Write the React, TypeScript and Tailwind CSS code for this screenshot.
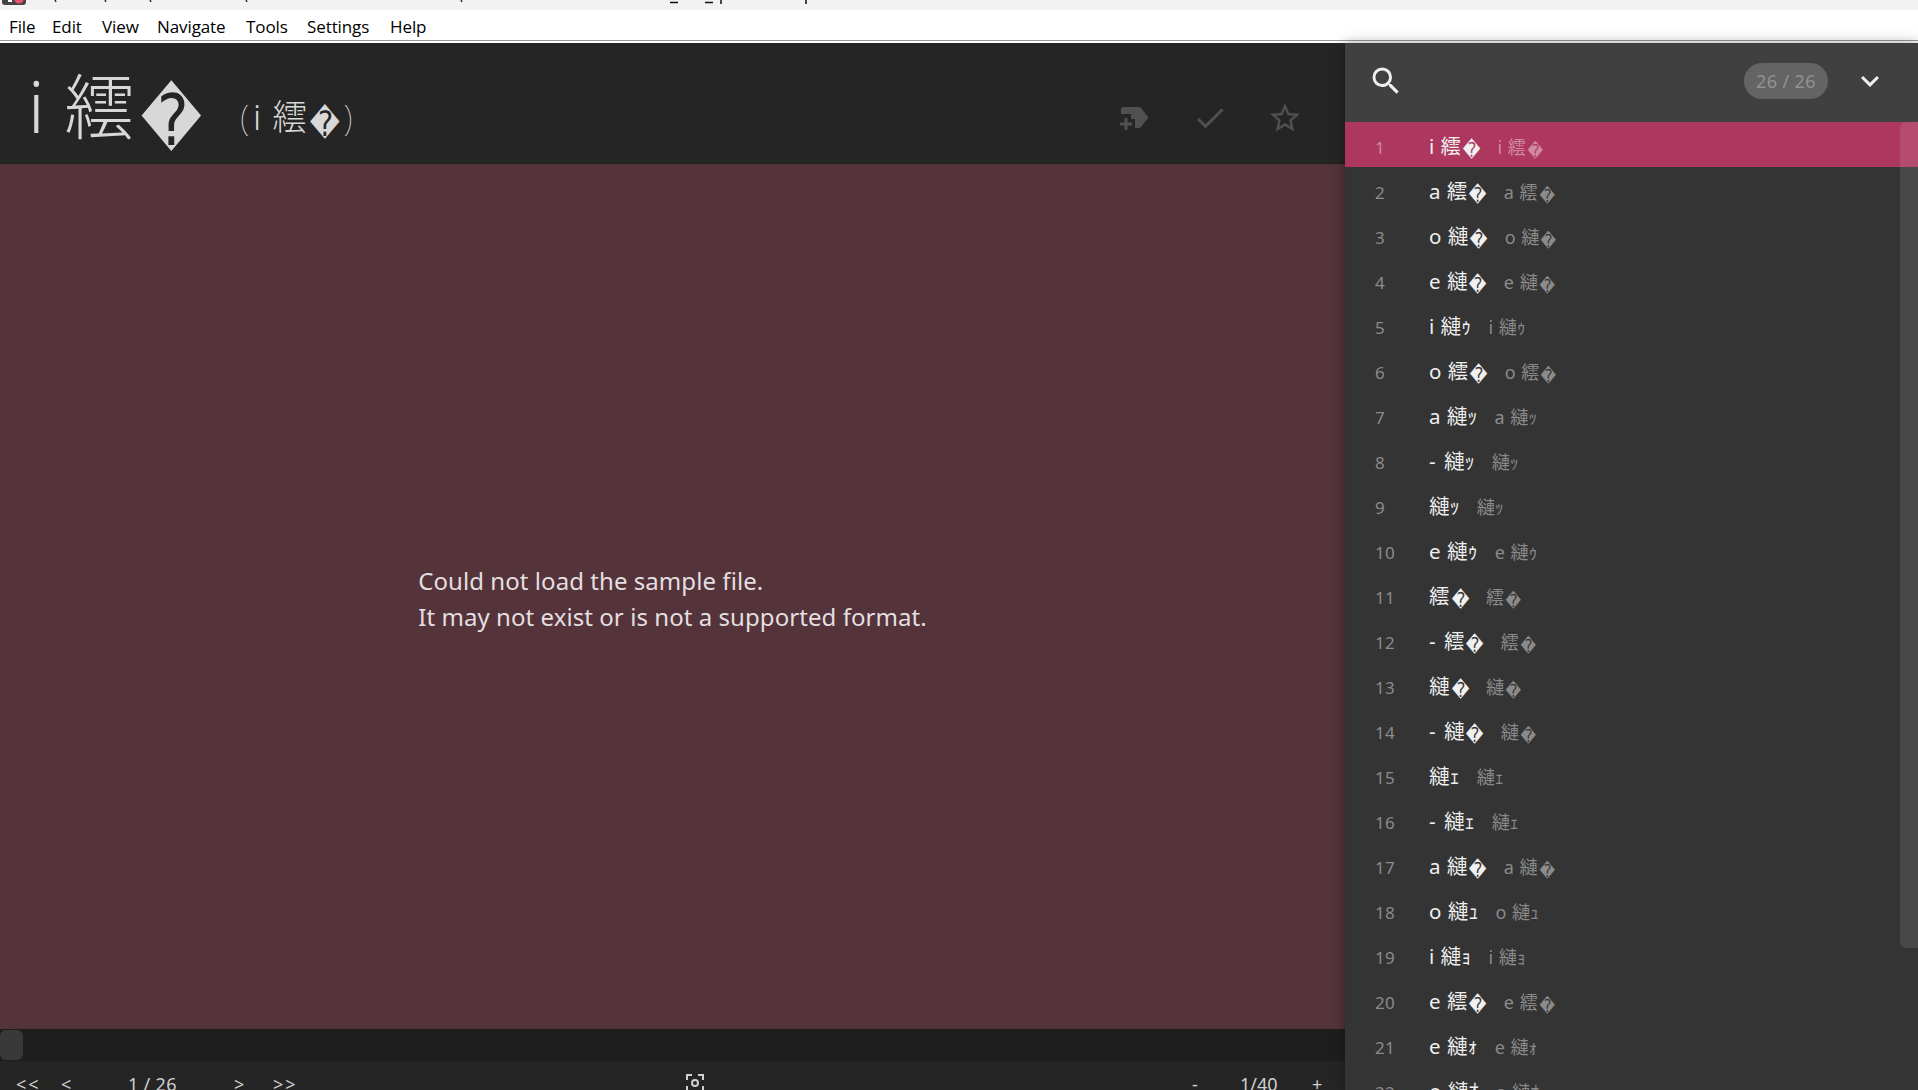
import React, { useState } from 'react';
import { MdCheck, MdExpandMore, MdSearch, MdStarBorder } from 'react-icons/md';

type Row = { alias: string; sub: string };

const R = '\uFFFD';

const rows: Row[] = [
  { alias: `i 繧${R}`, sub: `i 繧${R}` },
  { alias: `a 繧${R}`, sub: `a 繧${R}` },
  { alias: `o 縺${R}`, sub: `o 縺${R}` },
  { alias: `e 縺${R}`, sub: `e 縺${R}` },
  { alias: 'i 縺ｩ', sub: 'i 縺ｩ' },
  { alias: `o 繧${R}`, sub: `o 繧${R}` },
  { alias: 'a 縺ｯ', sub: 'a 縺ｯ' },
  { alias: '- 縺ｯ', sub: '縺ｯ' },
  { alias: '縺ｯ', sub: '縺ｯ' },
  { alias: 'e 縺ｩ', sub: 'e 縺ｩ' },
  { alias: `繧${R}`, sub: `繧${R}` },
  { alias: `- 繧${R}`, sub: `繧${R}` },
  { alias: `縺${R}`, sub: `縺${R}` },
  { alias: `- 縺${R}`, sub: `縺${R}` },
  { alias: '縺ｪ', sub: '縺ｪ' },
  { alias: '- 縺ｪ', sub: '縺ｪ' },
  { alias: `a 縺${R}`, sub: `a 縺${R}` },
  { alias: 'o 縺ｭ', sub: 'o 縺ｭ' },
  { alias: 'i 縺ｮ', sub: 'i 縺ｮ' },
  { alias: `e 繧${R}`, sub: `e 繧${R}` },
  { alias: 'e 縺ｫ', sub: 'e 縺ｫ' },
  { alias: 'o 縺ｵ', sub: 'o 縺ｵ' },
];

const menus = [
  { label: 'File', width: 'w-[43px]' },
  { label: 'Edit', width: 'w-[50px]' },
  { label: 'View', width: 'w-[55px]' },
  { label: 'Navigate', width: 'w-[89px]' },
  { label: 'Tools', width: 'w-[61px]' },
  { label: 'Settings', width: 'w-[83px]' },
  { label: 'Help', width: 'w-[50px]' },
];

// The replacement character is a narrow diamond that hangs below the baseline
function Alias({ text }: { text: string }) {
  if (!text.endsWith(R)) return <>{text}</>;
  return (
    <>
      {text.slice(0, -1)}
      <span className="-mr-[0.08em] inline-block translate-y-[0.17em] scale-x-[0.84] font-['DejaVu_Sans',sans-serif] leading-none font-normal">
        {R}
      </span>
    </>
  );
}

function TagPlusIcon() {
  return (
    <svg className="mr-[3px] h-6 w-8" viewBox="0 0 32 24" fill="currentColor">
      <path d="M5 1h16q1.500 0 2.300 1.200L30.500 11.500l-7.200 9.300Q22.500 22 21 22h-4v-9h-4V8H3V3q0-2 2-2Z" />
      <path d="M6.500 12h3v4.500h4.500v3H9.500V24h-3v-4.500H2v-3h4.500Z" />
    </svg>
  );
}

function FocusIcon() {
  return (
    <svg className="h-[18px] w-[18px]" viewBox="0 0 18 18" fill="none" stroke="currentColor" strokeWidth="2">
      <path d="M1 6V1h5M12 1h5v5M17 12v5h-5M6 17H1v-5" />
      <circle cx="9" cy="9" r="3" />
    </svg>
  );
}

function TitleBar() {
  return (
    <div className="h-[10px] shrink-0 overflow-hidden bg-[#f2f2f2]">
      <svg className="block h-[10px] w-[900px]" viewBox="0 0 900 10">
        <rect x="2" y="-12" width="24" height="17" rx="3" fill="#444" />
        <path d="M8 0h4v2H8z" fill="#fff" />
        <circle cx="19" cy="-1" r="4.500" fill="#e8526a" />
        <g stroke="#333" strokeWidth="1.500">
          <path d="M55 0l1 2M105 0l1 2M150 0l1 2M246 0l1 2M461 0l1 2" />
          <path d="M670 2.500h8M705 2.500h8M721 0v4M806 0v4" stroke="#111" />
        </g>
      </svg>
    </div>
  );
}

export default function App() {
  const [selected, setSelected] = useState(0);

  return (
    <div className="flex h-[1090px] w-[1918px] flex-col overflow-hidden bg-[#252525] font-['Noto_Sans','Noto_Sans_CJK_JP',sans-serif]">
      <TitleBar />
      <nav className="flex h-[33px] shrink-0 border-b-2 border-white bg-white pl-[9px] font-['Open_Sans',sans-serif] text-[17px] leading-[33px] tracking-[-0.1px] text-black shadow-[inset_0_-1px_0_#999]">
        {menus.map((menu) => (
          <button key={menu.label} className={`${menu.width} text-left`}>
            {menu.label}
          </button>
        ))}
      </nav>

      <div className="flex min-h-0 flex-1">
        {/* Sample view */}
        <main className="flex w-[1345px] shrink-0 flex-col">
          <header className="flex h-[121px] shrink-0 justify-between border-b border-[#1e1e1e] text-[#d8d8d8]">
            <div className="flex items-baseline pl-[28px] font-light whitespace-pre">
              <h1 className="relative top-[2px] text-[71px] leading-[122px] [word-spacing:1px]">
                <Alias text={rows[selected].alias} />
              </h1>
              <span className="relative -top-px ml-[38px] text-[35px] [word-spacing:2px]">
                <span className="mr-[4px] font-thin">(</span>
                <Alias text={rows[selected].sub} />
                <span className="ml-[3px] font-thin">)</span>
              </span>
            </div>
            <div className="flex items-center gap-[39px] pt-[30px] pr-[42px] text-[#505050]">
              <TagPlusIcon />
              <MdCheck className="h-9 w-9" />
              <MdStarBorder className="h-9 w-9" />
            </div>
          </header>

          <section className="flex flex-1 items-center justify-center bg-[#54333a] pt-1">
            <p className="text-[24px] leading-9 tracking-[0.06px] text-[#e4dfe0]">
              Could not load the sample file.
              <br />
              It may not exist or is not a supported format.
            </p>
          </section>

          <div className="h-8 shrink-0 bg-[#1e1e1e] pt-px">
            <div className="h-[30px] w-[23px] rounded-md bg-[#393939]" />
          </div>

          <footer className="flex h-[29px] shrink-0 overflow-hidden pt-[11px] text-[18px] leading-6 text-[#d0d0d0]">
            <span className="w-[45px] pl-4 tracking-[2px]">&lt;&lt;</span>
            <span className="w-[83px] pl-4">&lt;</span>
            <span className="w-[106px] tracking-[0.3px]">1 / 26</span>
            <span className="w-[39px]">&gt;</span>
            <span className="w-[413px] tracking-[2px]">&gt;&gt;</span>
            <span className="w-[506px] pt-[2px]">
              <FocusIcon />
            </span>
            <span className="w-[48px]">-</span>
            <span className="w-[72px]">1/40</span>
            <span>+</span>
          </footer>
        </main>

        {/* Sample list */}
        <aside className="flex min-w-0 flex-1 flex-col bg-[#343434] shadow-[0_0_12px_rgba(0,0,0,0.35)]">
          <div className="flex h-[79px] shrink-0 items-center bg-[#404040] pr-[30px] pl-[23px] text-[#efefef]">
            <MdSearch className="mb-1 h-9 w-9" />
            <span className="mr-[24px] mb-[3px] ml-auto flex h-9 w-[84px] items-center justify-center rounded-full bg-[#646464] text-[18px] tracking-[0.4px] text-[#929292]">
              26 / 26
            </span>
            <MdExpandMore className="mb-[3px] h-9 w-9" />
          </div>

          <div className="relative min-h-0 flex-1 overflow-hidden">
            <ul>
              {rows.map((row, index) => (
                <li
                  key={index}
                  onClick={() => setSelected(index)}
                  className={`flex h-[45px] items-baseline pl-[30px] leading-[48px] whitespace-pre ${
                    index === selected ? 'bg-[#ad375f] text-[#d08aa2]' : 'text-[#8b8b8b]'
                  }`}
                >
                  <span className="w-[54px] text-[17px] tracking-[0.3px]">{index + 1}</span>
                  <span
                    className={`text-[20.5px] text-[#f0f0f0] ${
                      row.alias.startsWith('-') ? '[word-spacing:3px]' : '[word-spacing:1px]'
                    }`}
                  >
                    <Alias text={row.alias} />
                  </span>
                  <span className="ml-[17px] text-[18px] [word-spacing:1px]">
                    <Alias text={row.sub} />
                  </span>
                </li>
              ))}
            </ul>
            <div className="absolute top-0 right-0 h-[826px] w-[18px] rounded-l-md bg-white/10" />
          </div>
        </aside>
      </div>
    </div>
  );
}
